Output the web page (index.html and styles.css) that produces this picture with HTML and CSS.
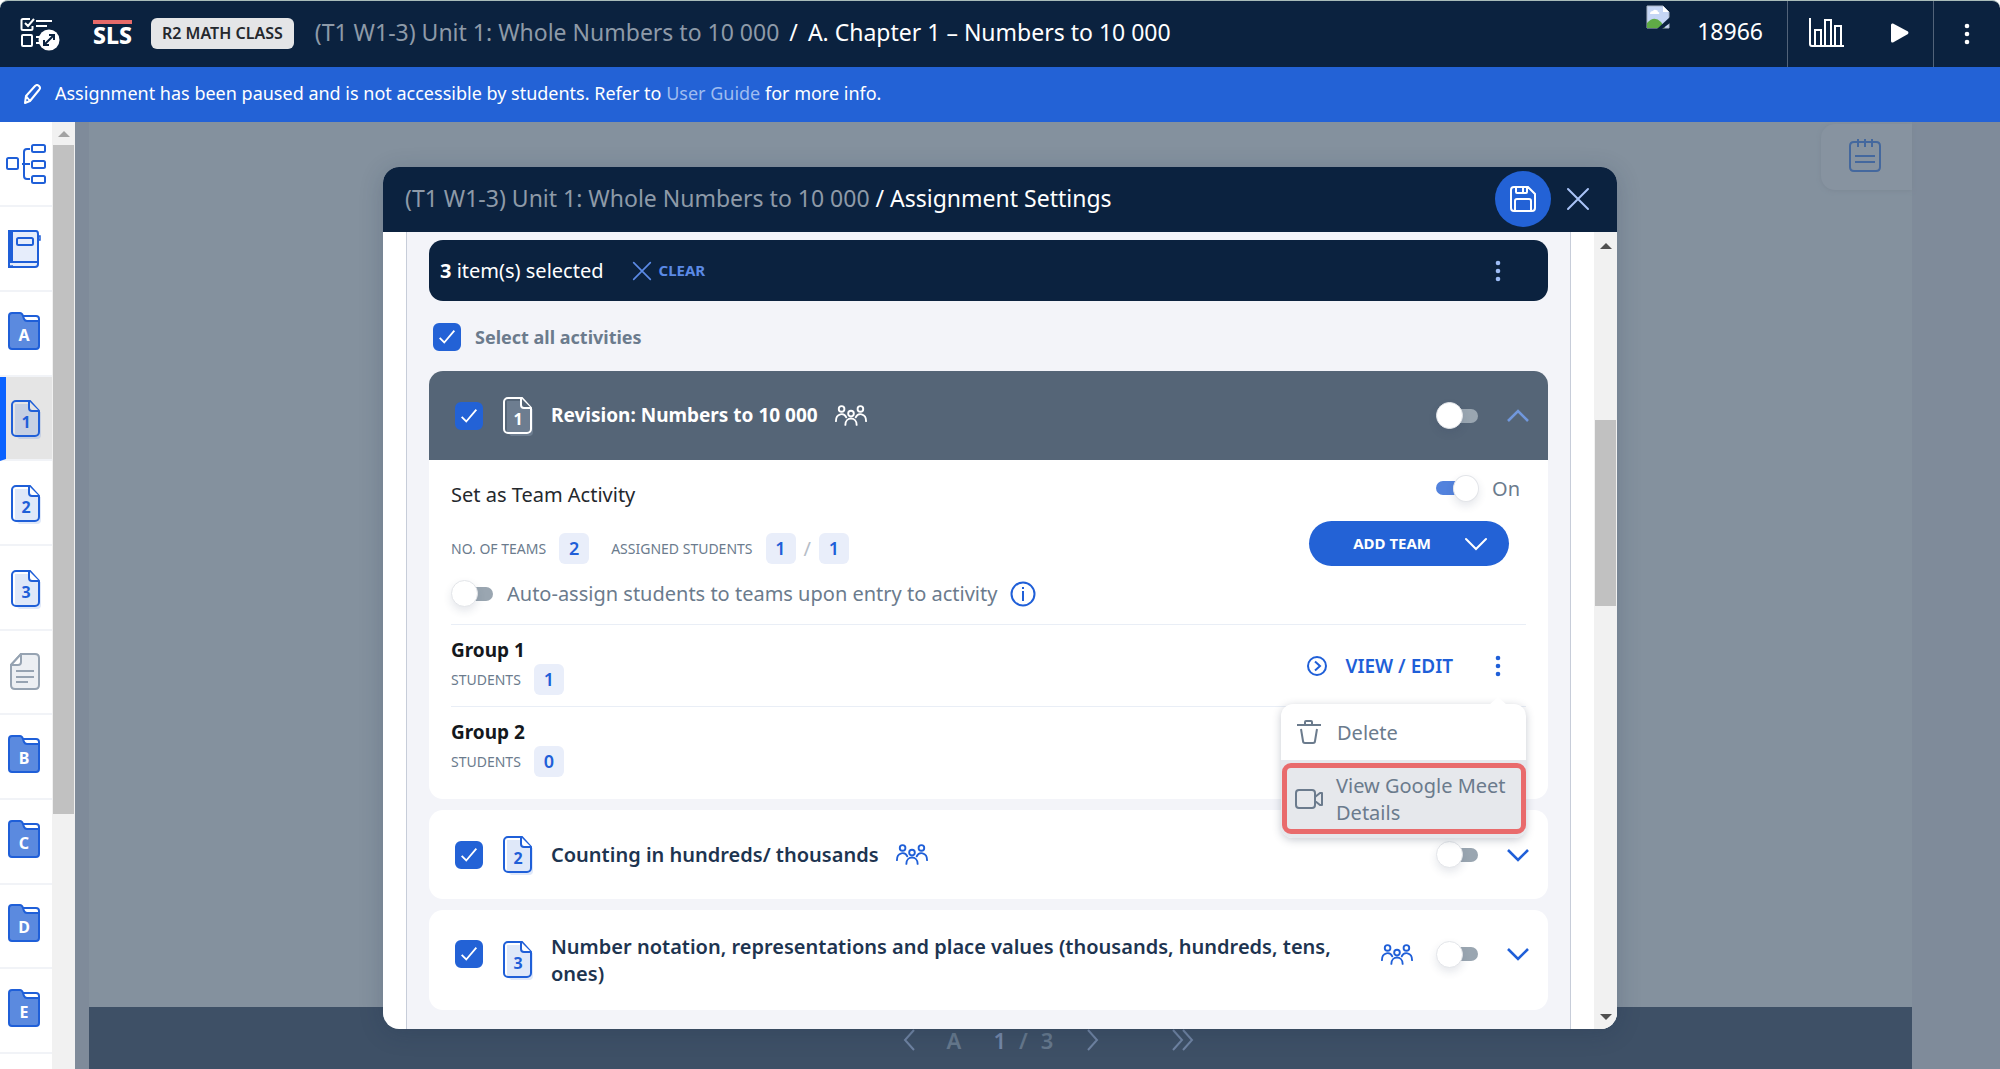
FILE: index.html
```html
<!DOCTYPE html>
<html lang="en">
<head>
<meta charset="utf-8">
<meta name="viewport" content="width=device-width, initial-scale=1">
<title>Assignment Settings</title>
<link rel="stylesheet" href="styles.css">
</head>
<body>
<svg class="defs" aria-hidden="true">
  <symbol id="doc" viewBox="0 0 32 40">
    <path d="M5 5h15l8 8h3v23a4 4 0 0 1-4 4H9l-4-4z" class="doc-shade"/>
    <path d="M6 2h14l9 10v21a4 4 0 0 1-4 4H6a4 4 0 0 1-4-4V6a4 4 0 0 1 4-4z" fill="none" stroke="currentColor" stroke-width="2"/>
    <path d="M19 2v7a3 3 0 0 0 3 3h7" class="doc-fold" stroke="currentColor" stroke-width="2"/>
  </symbol>
  <symbol id="folder" viewBox="0 0 32 38">
    <path d="M4 1h9l3 3h12q3 0 3 3v27q0 3-3 3H4q-3 0-3-3V4q0-3 3-3z" fill="#fff"/>
    <path d="M4 1h8q2 0 3 3l1 3q1 2 3 2h12v25q0 3-3 3H4q-3 0-3-3V4q0-3 3-3z" fill="#5b8adf"/>
    <path d="M4 1h8q2 0 3 3l1 3q1 2 3 2h12v25q0 3-3 3H4q-3 0-3-3V4q0-3 3-3zM15 4h13q3 0 3 3v3" fill="none" stroke="#1f5fd8" stroke-width="2"/>
  </symbol>
  <symbol id="team" viewBox="0 0 34 24">
    <g fill="none" stroke="currentColor" stroke-width="2" stroke-linecap="round">
      <circle cx="7" cy="5" r="3"/><circle cx="27" cy="5" r="3"/><circle cx="17" cy="10" r="3"/>
      <path d="M1 18c0-9 9-9 11-4M33 18c0-9-9-9-11-4M11 22c0-9 12-9 12 0"/>
    </g>
  </symbol>
  <symbol id="cross" viewBox="0 0 24 24"><path d="M2 2l20 20M22 2L2 22" fill="none" stroke="currentColor" stroke-width="2" stroke-linecap="round"/></symbol>
  <symbol id="dots" viewBox="0 0 6 22"><g fill="currentColor"><circle cx="3" cy="3" r="2.3"/><circle cx="3" cy="11" r="2.3"/><circle cx="3" cy="19" r="2.3"/></g></symbol>
  <symbol id="chevron" viewBox="0 0 22 14"><path d="M1 2l10 10L21 2" fill="none" stroke="currentColor" stroke-width="2.6"/></symbol>
</svg>

<header class="topbar">
  <button class="icon-btn" aria-label="Toggle outline">
    <svg width="40" height="34" viewBox="0 0 40 34" fill="none" stroke="#fff" stroke-width="2">
      <path d="M10 2H3q-1.500 0-1.500 1.500v8q0 1.500 1.500 1.500h8q1.500 0 1.500-1.500V9M5 6l3 3 6-7M16 4h16M16 9h11M3 18h8q1 0 1 1v9q0 1-1 1H3q-1 0-1-1v-9q0-1 1-1zM16 20h6M16 26h4"/>
      <circle cx="29" cy="23" r="10.500" fill="#fff" stroke="none"/>
      <path d="M24 28l10-10M29 18h5v5M24 23v5h5" stroke="#0b223f"/>
    </svg>
  </button>
  <a class="logo" href="#">SLS</a>
  <span class="class-chip">R2 MATH CLASS</span>
  <nav class="crumbs" aria-label="Breadcrumb"><a href="#">(T1 W1-3) Unit 1: Whole Numbers to 10 000</a><span class="crumbs__sep">/</span><span>A. Chapter 1 – Numbers to 10 000</span></nav>
  <div class="account">
    <svg width="24" height="24" viewBox="0 0 24 24" role="img" aria-label="Avatar">
      <path d="M1 1h16l6 6v16H1z" fill="#c5d6f5" stroke="#aab4c4"/>
      <path d="M4 9q0-3 3-3 1-2 3-1 2 0 2 2 2 0 1 2z" fill="#fff"/>
      <path d="M1 23v-5q7-8 14-1l4 6z" fill="#5fab46"/><path d="M17 1v6h6z" fill="#fff"/>
      <path d="M24 12L11 24h5l8-6z" fill="#0b223f"/>
    </svg>
    <span class="account__id">18966</span>
  </div>
  <div class="top-actions">
    <button class="icon-btn" aria-label="Reports"><svg width="36" height="30" viewBox="0 0 36 30" fill="none" stroke="#fff" stroke-width="2"><path d="M1 0v26q0 2 2 2h32M6 28V12h6v16M16 28V2h6v26M26 28V8h6v20"/></svg></button>
    <button class="icon-btn" aria-label="Play"><svg width="18" height="20" viewBox="0 0 18 20"><path d="M0 2q0-2 2-1.500l15 8q1 1 0 2.500L2 19.500Q0 20 0 18z" fill="#fff"/></svg></button>
  </div>
  <button class="icon-btn top-more" aria-label="More"><svg width="6" height="22"><use href="#dots"/></svg></button>
</header>

<p class="banner">
  <svg width="17" height="20" viewBox="0 0 17 20" fill="none" stroke="#fff" stroke-width="2" stroke-linejoin="round"><path d="M1 19l1-7 9-10q2-2 4 0t0 4L6 17zM2 12l4 5"/></svg>
  <span>Assignment has been paused and is not accessible by students. Refer to <a href="#">User Guide</a> for more info.</span>
</p>

<div class="workspace">
  <nav class="rail" aria-label="Activities">
    <a href="#" class="rail__item" aria-label="Map"><svg width="40" height="40" viewBox="0 0 40 40" fill="none" stroke="#1f5fd8" stroke-width="2"><rect x="1" y="14" width="11" height="11" rx="1.500"/><rect x="26" y="1" width="13" height="7" rx="1.500"/><rect x="26" y="17" width="13" height="7" rx="1.500"/><rect x="26" y="32" width="13" height="7" rx="1.500"/><path d="M24 5h-3q-3 0-3 3v24q0 3 3 3h3M16 20h8"/></svg></a>
    <a href="#" class="rail__item rail__item--book" aria-label="Journal"><svg width="34" height="38" viewBox="0 0 34 38" fill="none" stroke="#1f5fd8" stroke-width="2"><path d="M4 1h24q2 0 2 3v30q0 3-3 3H1V1z" fill="#e6edfb"/><path d="M2.500 1v31M1 32h29M1 36q2 1 4 0" /><path d="M4 1v31"/><rect x="9" y="8" width="16" height="7" rx="1.500"/><path d="M30 6h2v4h-2" stroke-width="1.500"/></svg></a>
    <a href="#" class="rail__item rail__item--folder"><svg width="32" height="38"><use href="#folder"/></svg><span>A</span></a>
    <a href="#" class="rail__item rail__item--doc is-current" aria-current="page"><svg width="32" height="40"><use href="#doc"/></svg><span>1</span></a>
    <a href="#" class="rail__item rail__item--doc"><svg width="32" height="40"><use href="#doc"/></svg><span>2</span></a>
    <a href="#" class="rail__item rail__item--doc"><svg width="32" height="40"><use href="#doc"/></svg><span>3</span></a>
    <a href="#" class="rail__item" aria-label="Summary"><svg width="30" height="38" viewBox="0 0 30 38" fill="#eceff3" stroke="#96a3b2" stroke-width="2"><path d="M11 1h14q4 0 4 4v27q0 4-4 4H5q-4 0-4-4V12z"/><path d="M1 12h7q3 0 3-3V1z" fill="#fff"/><path d="M6 18h18M6 24h18M6 29h12"/></svg></a>
    <a href="#" class="rail__item rail__item--folder"><svg width="32" height="38"><use href="#folder"/></svg><span>B</span></a>
    <a href="#" class="rail__item rail__item--folder"><svg width="32" height="38"><use href="#folder"/></svg><span>C</span></a>
    <a href="#" class="rail__item rail__item--folder"><svg width="32" height="38"><use href="#folder"/></svg><span>D</span></a>
    <a href="#" class="rail__item rail__item--folder"><svg width="32" height="38"><use href="#folder"/></svg><span>E</span></a>
  </nav>
  <div class="scrollbar scrollbar--rail" aria-hidden="true">
    <svg width="12" height="6" viewBox="0 0 12 6"><path d="M0 6l6-6 6 6z" fill="#a3a3a3"/></svg>
    <div class="scrollbar__thumb"></div>
  </div>
  <main class="stage">
    <div class="stage__page">
      <button class="notes" aria-label="Notes"><svg width="32" height="34" viewBox="0 0 32 34" fill="none" stroke="#44689e" stroke-width="2"><path d="M5 3h22q4 0 4 4v21q0 4-4 4H5q-4 0-4-4V7q0-4 4-4zM9 0v8M16 0v8M23 0v8M6 17h20M6 23h20"/></svg></button>
      <footer class="pager">
        <button aria-label="Previous"><svg width="12" height="22" viewBox="0 0 12 22"><path d="M11 1L2 11l9 10"/></svg></button>
        <span class="pager__part">A</span>
        <span class="pager__count"><b>1</b><i>/</i><span>3</span></span>
        <button aria-label="Next"><svg width="12" height="22" viewBox="0 0 12 22"><path d="M1 1l9 10-9 10"/></svg></button>
        <button class="pager__last" aria-label="Last"><svg width="22" height="22" viewBox="0 0 22 22"><path d="M1 1l9 10-9 10M11 1l9 10-9 10"/></svg></button>
      </footer>
    </div>
  </main>

  <div class="overlay">
    <section class="modal" role="dialog" aria-labelledby="modal-title">
      <header class="modal__head">
        <h1 class="modal__title" id="modal-title"><span>(T1 W1-3) Unit 1: Whole Numbers to 10 000</span> / <strong>Assignment Settings</strong></h1>
        <button class="save-btn" aria-label="Save"><svg width="26" height="26" viewBox="0 0 26 26" fill="none" stroke="#fff" stroke-width="2"><path d="M4 1h14l7 7v14q0 3-3 3H4q-3 0-3-3V4q0-3 3-3zM6 1v5q0 1 1 1h9q1 0 1-1V1M13 2v4M5 25V15q0-2 2-2h12q2 0 2 2v10"/></svg></button>
        <button class="icon-btn close-btn" aria-label="Close"><svg width="24" height="24"><use href="#cross"/></svg></button>
      </header>
      <div class="modal__body">
        <div class="panel">
          <div class="selection">
            <span><b>3</b> item(s) selected</span>
            <button class="clear-btn"><svg width="20" height="20"><use href="#cross"/></svg>CLEAR</button>
            <button class="icon-btn selection__more" aria-label="More actions"><svg width="6" height="22"><use href="#dots"/></svg></button>
          </div>
          <label class="select-all"><input type="checkbox" class="check" checked>Select all activities</label>

          <article class="activity activity--open">
            <div class="activity__head">
              <input type="checkbox" class="check" id="act-1" checked>
              <span class="doc-num"><svg width="32" height="40"><use href="#doc"/></svg><span>1</span></span>
              <label class="activity__name" for="act-1">Revision: Numbers to 10 000</label>
              <svg class="team-icon" width="32" height="23"><use href="#team"/></svg>
              <input type="checkbox" class="switch" role="switch" aria-label="Activity 1">
              <button class="icon-btn fold-btn fold-btn--open" aria-label="Collapse"><svg width="22" height="14"><use href="#chevron"/></svg></button>
            </div>
            <div class="activity__body">
              <div class="team">
                <div class="team__info">
                  <h2 class="team__title">Set as Team Activity</h2>
                  <div class="stats">
                    <span>NO. OF TEAMS</span><b class="badge">2</b>
                    <span class="stats__next">ASSIGNED STUDENTS</span><b class="badge">1</b><i>/</i><b class="badge">1</b>
                  </div>
                  <div class="auto">
                    <input type="checkbox" class="switch" role="switch" id="auto">
                    <label for="auto">Auto-assign students to teams upon entry to activity</label>
                    <svg width="26" height="26" viewBox="0 0 26 26" fill="none" stroke="#1f5fd8" stroke-width="2"><circle cx="13" cy="13" r="11.500"/><path d="M13 10v10M13 6v2"/></svg>
                  </div>
                </div>
                <div class="team__actions">
                  <label class="team__toggle"><input type="checkbox" class="switch" role="switch" checked>On</label>
                  <button class="add-btn">ADD TEAM<svg width="22" height="14" viewBox="0 0 22 14"><path d="M1 2l10 10L21 2" fill="none" stroke="#fff" stroke-width="2" stroke-linecap="round"/></svg></button>
                </div>
              </div>
              <div class="group">
                <div>
                  <h3 class="group__name">Group 1</h3>
                  <div class="stats"><span>STUDENTS</span><b class="badge">1</b></div>
                </div>
                <a class="view-link" href="#"><svg width="20" height="20" viewBox="0 0 20 20" fill="none" stroke="currentColor" stroke-width="2"><circle cx="10" cy="10" r="9"/><path d="M8 5.500l5 4.500-5 4.500"/></svg>VIEW / EDIT</a>
                <button class="icon-btn group__more" aria-label="Group 1 options" aria-expanded="true"><svg width="6" height="22"><use href="#dots"/></svg></button>
                <div class="menu">
                  <button class="menu__item"><svg width="26" height="26" viewBox="0 0 26 26" fill="none" stroke="currentColor" stroke-width="2" stroke-linejoin="round"><path d="M1 6h24M9 6V3q0-1 1-1h5q1 0 1 1v3M5 10l2 12q0 2 2 2h8q2 0 2-2l2-12"/></svg>Delete</button>
                  <button class="menu__item menu__item--marked"><svg width="28" height="20" viewBox="0 0 28 20" fill="none" stroke="currentColor" stroke-width="2" stroke-linejoin="round"><rect x="1" y="1" width="19" height="18" rx="3"/><path d="M20 8l5-4h2v12h-2l-5-4z"/></svg>View Google Meet Details</button>
                </div>
              </div>
              <div class="group">
                <div>
                  <h3 class="group__name">Group 2</h3>
                  <div class="stats"><span>STUDENTS</span><b class="badge">0</b></div>
                </div>
              </div>
            </div>
          </article>

          <article class="activity">
            <div class="activity__head">
              <input type="checkbox" class="check" id="act-2" checked>
              <span class="doc-num"><svg width="32" height="40"><use href="#doc"/></svg><span>2</span></span>
              <label class="activity__name" for="act-2">Counting in hundreds/ thousands</label>
              <svg class="team-icon" width="32" height="23"><use href="#team"/></svg>
              <input type="checkbox" class="switch" role="switch" aria-label="Activity 2">
              <button class="icon-btn fold-btn" aria-label="Expand"><svg width="22" height="14"><use href="#chevron"/></svg></button>
            </div>
          </article>

          <article class="activity activity--tall">
            <div class="activity__head">
              <input type="checkbox" class="check" id="act-3" checked>
              <span class="doc-num"><svg width="32" height="40"><use href="#doc"/></svg><span>3</span></span>
              <label class="activity__name" for="act-3">Number notation, representations and place values (thousands, hundreds, tens, ones)</label>
              <svg class="team-icon" width="32" height="23"><use href="#team"/></svg>
              <input type="checkbox" class="switch" role="switch" aria-label="Activity 3">
              <button class="icon-btn fold-btn" aria-label="Expand"><svg width="22" height="14"><use href="#chevron"/></svg></button>
            </div>
          </article>
        </div>
        <div class="scrollbar scrollbar--modal" aria-hidden="true">
          <svg width="12" height="6" viewBox="0 0 12 6"><path d="M0 6l6-6 6 6z" fill="#505050"/></svg>
          <div class="scrollbar__thumb"></div>
          <svg class="scrollbar__down" width="12" height="6" viewBox="0 0 12 6"><path d="M0 0l6 6 6-6z" fill="#505050"/></svg>
        </div>
      </div>
    </section>
  </div>
</div>
</body>
</html>
```
FILE: styles.css
```css
:root {
  --navy: #0b223f;
  --blue: #2362d6;
  --link: #1f5fd8;
  --slate: #6b7b8d;
  --ink: #1d3450;
}

* { box-sizing: border-box; }

body {
  margin: 0;
  height: 100vh;
  display: flex;
  flex-direction: column;
  overflow: hidden;
  font-family: "Noto Sans", sans-serif;
  font-size: 20px;
  line-height: 27px;
  background: #fff;
}

h1, h2, h3, p { margin: 0; font-weight: 400; }
svg { flex: none; display: block; }
i { font-style: normal; }
a { color: inherit; text-decoration: none; }

button {
  font: inherit;
  color: inherit;
  background: none;
  border: 0;
  padding: 0;
  cursor: pointer;
}

.defs { position: absolute; width: 0; height: 0; }
.icon-btn { display: grid; place-items: center; }

/* document glyph tints, set by the row that holds it */
.doc-shade { fill: var(--shade, #dfe8f9); }
.doc-fold { fill: var(--fold, #fff); }

/* top bar */
.topbar {
  display: flex;
  align-items: center;
  flex: none;
  height: 67px;
  padding-left: 20px;
  color: #fff;
  background: var(--navy);
  border-top: 1px solid #a9bcb9;
  border-radius: 8px 8px 0 0;
}
.logo {
  margin-left: 33px;
  padding-bottom: 2px;
  border-top: 4px solid #e66a69;
  font-size: 23px;
  line-height: 22px;
  font-weight: 800;
}
.class-chip {
  margin: 0 0 2px 19px;
  padding: 2px 11px;
  border-radius: 6px;
  background: #e4e5e7;
  color: #24282d;
  font-size: 16px;
  font-weight: 600;
}
.crumbs { margin-left: 21px; padding-bottom: 4px; font-size: 23px; white-space: nowrap; }
.crumbs a { color: #8e9aa8; }
.crumbs__sep { margin: 0 10px; }
.account { display: flex; align-self: stretch; margin-left: auto; padding: 4px 24px 0 0; gap: 27px; }
.account__id { font-size: 23px; line-height: 52px; }
.top-actions {
  display: flex;
  align-items: center;
  align-self: stretch;
  gap: 46px;
  padding: 0 24px 2px 21px;
  border: solid #526379;
  border-width: 0 1px;
}
.top-more { width: 66px; height: 44px; }

.banner {
  display: flex;
  align-items: center;
  flex: none;
  gap: 14px;
  height: 55px;
  padding: 0 0 2px 24px;
  background: var(--blue);
  color: #fff;
  font-size: 18px;
}
.banner a { color: #9fbcf0; }

/* workspace */
.workspace { position: relative; display: flex; flex: 1; min-height: 0; }
.rail { width: 52px; flex: none; overflow: hidden; padding-top: 1px; background: #fff; color: var(--link); }
.rail__item {
  display: grid;
  align-items: center;
  height: 85px;
  padding-left: 6px;
  border-bottom: 2px solid #f1f3f7;
}
.rail__item > * { grid-area: 1 / 1; }
.rail__item:nth-child(7) { padding-left: 10px; }
.rail__item:nth-child(3n + 1) { height: 84px; }
.rail__item--book { padding-left: 8px; }
.rail__item--folder { padding: 0 0 6px 8px; }
.rail__item--doc { padding: 2px 0 0 10px; }
.rail__item span { width: 32px; padding-top: 6px; text-align: center; font-size: 16px; font-weight: 700; line-height: 20px; }
.rail__item--folder span { padding-top: 8px; color: #fff; }
.rail__item.is-current {
  --shade: #c6d0e3;
  --fold: #e5e5e5;
  padding-left: 4px;
  border-left: 6px solid #0a62ff;
  background: #e5e5e5;
}

.scrollbar {
  display: flex;
  flex-direction: column;
  align-items: center;
  flex: none;
  width: 23px;
  padding: 9px 0;
  background: #f1f1f1;
}
.scrollbar__thumb { width: 21px; background: #c1c1c1; }
.scrollbar--rail .scrollbar__thumb { height: 72%; margin-top: 8px; }
.scrollbar--modal { padding-top: 11px; }
.scrollbar--modal .scrollbar__thumb { height: 24%; margin-top: 171px; }
.scrollbar__down { margin-top: auto; }

.stage { flex: 1; display: flex; padding: 0 88px 0 14px; background: #7f8b9a; }
.stage__page { flex: 1; display: flex; flex-direction: column; justify-content: space-between; background: #84919e; }
.notes {
  display: grid;
  place-items: center;
  align-self: flex-end;
  width: 91px;
  height: 66px;
  margin-top: 2px;
  padding: 0 3px 2px 0;
  border-radius: 14px 0 0 14px;
  background: #8793a0;
  box-shadow: 0 1px 4px #7c8895;
}
.pager {
  display: flex;
  align-items: center;
  justify-content: center;
  height: 62px;
  padding: 4px 0 0 96px;
  background: #3e5066;
  color: #66788c;
  font-size: 22px;
  font-weight: 600;
}
.pager svg { fill: none; stroke: #6f83a2; stroke-width: 2; }
.pager__part { margin: 0 32px; }
.pager__count { display: flex; gap: 13px; }
.pager__count b { color: #7487a8; font-weight: 600; }
.pager__count + button { margin-left: 34px; }
.pager__last { margin-left: 73px; }

/* modal */
.overlay {
  position: absolute;
  inset: 0;
  display: flex;
  justify-content: center;
  padding: 45px 24px 40px;
}
.modal {
  display: flex;
  flex-direction: column;
  width: 100%;
  max-width: 1234px;
  overflow: hidden;
  border-radius: 16px;
  background: #fff;
  box-shadow: 0 4px 24px rgba(20, 40, 70, .2);
}
.modal__head {
  display: flex;
  align-items: center;
  flex: none;
  height: 65px;
  padding: 0 27px 2px 22px;
  color: #fff;
  background: var(--navy);
}
.modal__title { flex: 1; padding-bottom: 2px; font-size: 23px; line-height: 30px; }
.modal__title span { color: #8e9aa8; }
.modal__title strong { font-weight: 400; }
.save-btn { display: grid; place-items: center; width: 56px; height: 56px; border-radius: 50%; background: var(--blue); }
.close-btn { margin-left: 15px; color: #aac4f7; }
.modal__body { display: flex; flex: 1; min-height: 0; padding-left: 23px; }
.panel {
  flex: 1;
  min-width: 0;
  margin-right: 23px;
  padding: 8px 22px 19px;
  border: solid #c7cdd9;
  border-width: 0 1px;
  background: #f3f4f9;
}

.selection {
  display: flex;
  align-items: center;
  height: 61px;
  padding: 0 35px 0 11px;
  border-radius: 14px;
  background: var(--navy);
  color: #fff;
}
.clear-btn { display: flex; align-items: center; gap: 7px; margin-left: 28px; color: #5b8ae6; font-size: 15px; font-weight: 700; }
.selection__more { width: 30px; height: 30px; margin-left: auto; color: #9dbcf6; }

.select-all {
  display: flex;
  align-items: center;
  gap: 14px;
  height: 70px;
  padding: 2px 0 0 4px;
  color: var(--slate);
  font-size: 18px;
  font-weight: 700;
}

.check {
  appearance: none;
  flex: none;
  width: 28px;
  height: 28px;
  margin: 0;
  border: 2px solid var(--blue);
  border-radius: 6px;
}
.check:checked {
  background: var(--blue) url("data:image/svg+xml,%3Csvg xmlns='http://www.w3.org/2000/svg' viewBox='0 0 24 24' fill='none' stroke='white' stroke-width='2'%3E%3Cpath d='M4 13l5 5L20 5'/%3E%3C/svg%3E") center / 22px no-repeat;
}

.switch {
  appearance: none;
  display: flex;
  align-items: center;
  flex: none;
  width: 43px;
  height: 26px;
  margin: 0;
}
.switch::before {
  content: "";
  position: relative;
  z-index: 1;
  width: 25px;
  height: 25px;
  border: 1px solid #e3e5e9;
  border-radius: 50%;
  background: #fff;
  box-shadow: 0 4px 8px rgba(40, 60, 90, .12);
}
.switch::after { content: ""; width: 25px; height: 14px; margin-left: -10px; border-radius: 7px; background: #9aa6b1; }
.switch:checked { flex-direction: row-reverse; justify-content: flex-end; }
.switch:checked::before { margin-left: -9px; }
.switch:checked::after { margin-left: 0; width: 28px; background: #5282dd; }

.activity { border-radius: 14px; background: #fff; color: var(--ink); }
.activity + .activity { margin-top: 11px; }
.activity__head { display: flex; align-items: center; min-height: 89px; padding: 0 19px 0 26px; }
.activity__name { margin-left: 17px; font-weight: 600; }
.doc-num { display: grid; align-items: center; margin-left: 19px; color: var(--link); }
.doc-num > * { grid-area: 1 / 1; }
.doc-num span { padding-top: 6px; text-align: center; font-size: 16px; font-weight: 700; line-height: 20px; }
.team-icon { margin: 0 23px 0 17px; color: var(--link); }
.activity .activity__head .switch { margin-left: auto; }
.fold-btn { margin-left: 28px; color: var(--link); }
.fold-btn--open { color: #7198dd; }
.fold-btn--open svg { transform: rotate(180deg); }
.activity--tall .activity__head { min-height: 100px; }
.activity--tall .check,
.activity--tall .team-icon,
.activity--tall .switch,
.activity--tall .fold-btn { margin-bottom: 12px; }

.activity--open { --shade: #6d7d90; --fold: #556577; }
.activity--open .activity__head { border-radius: 14px 14px 0 0; background: #556577; color: #fff; }
.activity--open .activity__name { font-size: 19px; font-weight: 700; }
.activity--open .doc-num,
.activity--open .team-icon { color: #fff; }
.activity__body { padding: 0 22px 11px; }

.team { display: flex; justify-content: space-between; height: 164px; }
.team__info { padding-top: 20px; }
.team__title { font-size: 20px; line-height: 30px; color: #24282d; }
.stats { display: flex; align-items: center; height: 31px; color: var(--slate); font-size: 14px; }
.stats i { margin: 0 8px; font-size: 20px; color: #b6bec8; }
.team__info .stats { margin: 23px 0 16px; }
.stats__next { margin-left: 22px; }
.badge {
  min-width: 30px;
  height: 31px;
  border-radius: 6px;
  background: #e9eefa;
  color: var(--link);
  font-size: 18px;
  font-weight: 600;
  line-height: 31px;
  text-align: center;
}
.stats span + .badge { margin-left: 13px; }
.auto { display: flex; align-items: center; color: var(--slate); }
.auto label { margin: 0 13px; }
.team__actions { display: flex; flex-direction: column; align-items: flex-end; padding-top: 15px; color: var(--slate); }
.team__toggle { display: flex; align-items: center; gap: 13px; height: 26px; margin-right: 6px; }
.add-btn {
  display: flex;
  align-items: center;
  justify-content: flex-end;
  gap: 34px;
  width: 200px;
  height: 45px;
  margin: 20px 17px 0 0;
  padding-right: 22px;
  border-radius: 23px;
  background: var(--blue);
  color: #fff;
  font-size: 15px;
  font-weight: 700;
}

.group {
  position: relative;
  display: flex;
  justify-content: space-between;
  padding: 12px 0 11px;
  border-top: 1px solid #e9eef6;
}
.group__name { color: #14181d; font-size: 19px; font-weight: 700; }
.view-link { display: flex; align-items: center; gap: 18px; margin-left: auto; color: var(--link); font-size: 19px; font-weight: 600; }
.group__more { width: 30px; margin: 0 13px 0 30px; color: var(--link); }

.menu {
  position: absolute;
  z-index: 2;
  top: 79px;
  right: 0;
  width: 245px;
  border-radius: 12px;
  background: #fff;
  box-shadow: 0 2px 8px rgba(30, 45, 70, .25);
  color: var(--slate);
}
.menu::before {
  content: "";
  position: absolute;
  top: -7px;
  right: 19px;
  border: solid transparent;
  border-width: 0 9px 8px;
  border-bottom-color: #fff;
}
.menu__item { display: flex; align-items: center; gap: 15px; width: 100%; height: 56px; padding: 0 15px; text-align: left; }
.menu__item--marked { position: relative; height: 78px; gap: 13px; padding: 0 14px; border-radius: 0 0 12px 12px; background: #e6e8ec; }
.menu__item--marked::after {
  content: "";
  position: absolute;
  inset: 3px 0 4px 1px;
  border: 5px solid #e96b6c;
  border-radius: 9px;
}
```
